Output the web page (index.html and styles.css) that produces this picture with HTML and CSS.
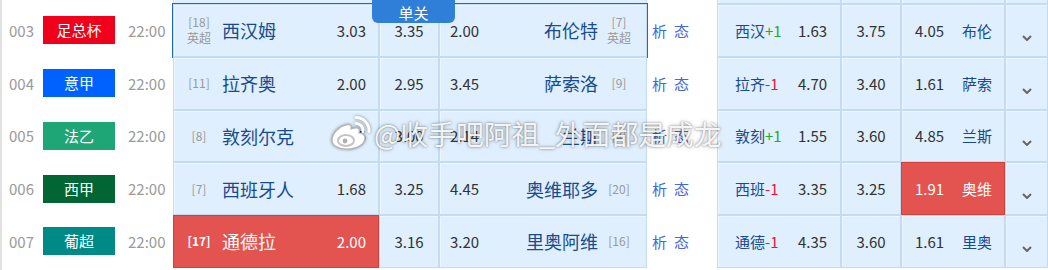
FILE: index.html
```html
<!DOCTYPE html>
<html lang="zh-CN">
<head>
<meta charset="utf-8">
<title>竞彩</title>
<link rel="stylesheet" href="styles.css">
</head>
<body>
<div class="board">
  <div class="row ghost">
    <div class="lead"></div>
    <div class="match">
      <div class="cell home"></div><div class="cell draw"></div><div class="cell away"></div>
    </div>
    <div class="ana"></div>
    <div class="hcp">
      <div class="cell h1"></div><div class="cell h2"></div><div class="cell h3"></div><div class="cell more"></div>
    </div>
  </div>

  <div class="row">
    <div class="lead"><span class="no">003</span><span class="league lg-red">足总杯</span><span class="time">22:00</span></div>
    <div class="match active">
      <span class="tag">单关</span>
      <div class="cell home"><span class="rank">[18]<small>英超</small></span><span class="name">西汉姆</span><span class="odd">3.03</span></div>
      <div class="cell draw"><span class="odd">3.35</span></div>
      <div class="cell away"><span class="odd">2.00</span><span class="name">布伦特</span><span class="rank">[7]<small>英超</small></span></div>
    </div>
    <div class="ana"><span>析</span><span>态</span></div>
    <div class="hcp">
      <div class="cell h1"><span class="hname">西汉<em class="up">+1</em></span><span class="odd">1.63</span></div>
      <div class="cell h2"><span class="odd">3.75</span></div>
      <div class="cell h3"><span class="odd">4.05</span><span class="hname">布伦</span></div>
      <div class="cell more"><svg class="chev" viewBox="0 0 10 6" width="10" height="6"><path d="M1 1 L5 5 L9 1" fill="none" stroke="#666" stroke-width="2"/></svg></div>
    </div>
  </div>

  <div class="row">
    <div class="lead"><span class="no">004</span><span class="league lg-blue">意甲</span><span class="time">22:00</span></div>
    <div class="match">
      <div class="cell home"><span class="rank">[11]</span><span class="name">拉齐奥</span><span class="odd">2.00</span></div>
      <div class="cell draw"><span class="odd">2.95</span></div>
      <div class="cell away"><span class="odd">3.45</span><span class="name">萨索洛</span><span class="rank">[9]</span></div>
    </div>
    <div class="ana"><span>析</span><span>态</span></div>
    <div class="hcp">
      <div class="cell h1"><span class="hname">拉齐<em class="down">-1</em></span><span class="odd">4.70</span></div>
      <div class="cell h2"><span class="odd">3.40</span></div>
      <div class="cell h3"><span class="odd">1.61</span><span class="hname">萨索</span></div>
      <div class="cell more"><svg class="chev" viewBox="0 0 10 6" width="10" height="6"><path d="M1 1 L5 5 L9 1" fill="none" stroke="#666" stroke-width="2"/></svg></div>
    </div>
  </div>

  <div class="row">
    <div class="lead"><span class="no">005</span><span class="league lg-green">法乙</span><span class="time">22:00</span></div>
    <div class="match">
      <div class="cell home"><span class="rank">[8]</span><span class="name">敦刻尔克</span><span class="odd">3.05</span></div>
      <div class="cell draw"><span class="odd">3.00</span></div>
      <div class="cell away"><span class="odd">2.14</span><span class="name">兰斯</span><span class="rank">[4]</span></div>
    </div>
    <div class="ana"><span>析</span><span>态</span></div>
    <div class="hcp">
      <div class="cell h1"><span class="hname">敦刻<em class="up">+1</em></span><span class="odd">1.55</span></div>
      <div class="cell h2"><span class="odd">3.60</span></div>
      <div class="cell h3"><span class="odd">4.85</span><span class="hname">兰斯</span></div>
      <div class="cell more"><svg class="chev" viewBox="0 0 10 6" width="10" height="6"><path d="M1 1 L5 5 L9 1" fill="none" stroke="#666" stroke-width="2"/></svg></div>
    </div>
  </div>

  <div class="row">
    <div class="lead"><span class="no">006</span><span class="league lg-dgreen">西甲</span><span class="time">22:00</span></div>
    <div class="match">
      <div class="cell home"><span class="rank">[7]</span><span class="name">西班牙人</span><span class="odd">1.68</span></div>
      <div class="cell draw"><span class="odd">3.25</span></div>
      <div class="cell away"><span class="odd">4.45</span><span class="name">奥维耶多</span><span class="rank">[20]</span></div>
    </div>
    <div class="ana"><span>析</span><span>态</span></div>
    <div class="hcp">
      <div class="cell h1"><span class="hname">西班<em class="down">-1</em></span><span class="odd">3.35</span></div>
      <div class="cell h2"><span class="odd">3.25</span></div>
      <div class="cell h3 sel"><span class="odd">1.91</span><span class="hname">奥维</span></div>
      <div class="cell more"><svg class="chev" viewBox="0 0 10 6" width="10" height="6"><path d="M1 1 L5 5 L9 1" fill="none" stroke="#666" stroke-width="2"/></svg></div>
    </div>
  </div>

  <div class="row">
    <div class="lead"><span class="no">007</span><span class="league lg-teal">葡超</span><span class="time">22:00</span></div>
    <div class="match">
      <div class="cell home sel"><span class="rank">[17]</span><span class="name">通德拉</span><span class="odd">2.00</span></div>
      <div class="cell draw"><span class="odd">3.16</span></div>
      <div class="cell away"><span class="odd">3.20</span><span class="name">里奥阿维</span><span class="rank">[16]</span></div>
    </div>
    <div class="ana"><span>析</span><span>态</span></div>
    <div class="hcp">
      <div class="cell h1"><span class="hname">通德<em class="down">-1</em></span><span class="odd">4.35</span></div>
      <div class="cell h2"><span class="odd">3.60</span></div>
      <div class="cell h3"><span class="odd">1.61</span><span class="hname">里奥</span></div>
      <div class="cell more"><svg class="chev" viewBox="0 0 10 6" width="10" height="6"><path d="M1 1 L5 5 L9 1" fill="none" stroke="#666" stroke-width="2"/></svg></div>
    </div>
  </div>

  <div class="watermark">
    <svg class="wb-logo" viewBox="0 0 42 36" width="42" height="36">
      <path d="M17 10C11 11 3 18 3 25c0 6 7 9 15 9 10 0 18-5 18-11 0-3-3-5-6-5 1-3 0-6-4-5l-4 1c1-4-1-5-5-4z" fill="#fff" stroke="#b5b5b5" stroke-width="1.2"/>
      <ellipse cx="17" cy="25.5" rx="8" ry="5.5" fill="none" stroke="#c4c4c4" stroke-width="2"/>
      <circle cx="16" cy="26" r="2.4" fill="#b0b0b0"/>
      <path d="M27 8.5a7 7 0 0 1 7 8" fill="none" stroke="#fff" stroke-width="3" stroke-linecap="round"/>
      <path d="M27 2.5a13 13 0 0 1 13 14" fill="none" stroke="#fff" stroke-width="3" stroke-linecap="round"/>
    </svg>
    <span class="wb-text">@收手吧阿祖_外面都是成龙</span>
  </div>
</div>
</body>
</html>
```

FILE: styles.css
```css
html, body {
  margin: 0;
  padding: 0;
  background: #fff;
}
body {
  font-family: "Noto Sans CJK SC", "Noto Sans", sans-serif;
  font-size: 15px;
  color: #333;
  height: 270px;
  overflow: hidden;
}
.board {
  position: relative;
  display: flex;
  flex-direction: column;
  width: 1046px;
  border-left: 2px solid #e2e2e2;
  min-height: 270px;
}
.row {
  display: flex;
  flex: none;
  height: 52.75px;
}
.row.ghost {
  margin-top: -48.75px;
}
.lead {
  width: 171px;
  display: flex;
  align-items: center;
  padding-left: 7px;
  box-sizing: border-box;
}
.no {
  width: 34px;
  color: #9a9a9a;
}
.league {
  width: 72px;
  height: 28px;
  line-height: 28px;
  text-align: center;
  color: #fff;
}
.lg-red { background: #f0001a; }
.lg-blue { background: #0062fe; }
.lg-green { background: #1ea677; }
.lg-dgreen { background: #016633; }
.lg-teal { background: #008a87; }
.time {
  margin-left: 13px;
  color: #9a9a9a;
}
.match {
  position: relative;
  width: 474px;
  display: flex;
}
.match.active {
  outline: 1px solid #1d6cb8;
}
.tag {
  position: absolute;
  left: 199px;
  top: -5px;
  width: 83px;
  height: 24px;
  line-height: 28px;
  text-align: center;
  color: #fff;
  background: #2f7ed8;
  border-radius: 0 0 6px 6px;
  z-index: 2;
}
.cell {
  box-sizing: border-box;
  height: 100%;
  display: flex;
  align-items: center;
  background: #dfeffd;
  border: 1px solid #c3dbf3;
  box-shadow: inset 1px 1px 0 #eef7ff;
}
.cell.sel {
  background: #e35451;
  border-color: #d0423e;
  box-shadow: none;
  color: #fff;
}
.home { width: 206px; padding: 0 12px 0 13px; }
.draw { width: 60px; justify-content: center; }
.away { width: 208px; padding: 0 15px 0 10px; }
.rank {
  width: 24px;
  display: flex;
  flex-direction: column;
  align-items: center;
  font-size: 12px;
  line-height: 16px;
  color: #999;
}
.rank small {
  font-size: 12px;
}
.name {
  font-size: 18px;
  color: #184a8e;
}
.home .name { margin-left: 11px; }
.home .odd { margin-left: auto; }
.away .name { margin-left: auto; margin-right: 9px; }
.sel .rank { color: #fff; font-weight: bold; }
.sel .name, .sel .odd, .sel .hname { color: #fff; }
.odd { color: #333; }
.ana {
  width: 70px;
  display: flex;
  align-items: center;
  padding-left: 5px;
  box-sizing: border-box;
  gap: 7px;
  color: #3f6ad8;
}
.hcp {
  width: 331px;
  display: flex;
}
.h1 { width: 124px; padding-left: 17px; }
.h2 { width: 60px; justify-content: center; }
.h3 { width: 104px; padding-left: 13px; }
.more { width: 43px; justify-content: center; }
.hname { color: #184a8e; }
.h1 .hname { width: 63px; }
.h3 .odd { width: 47px; }
.up { font-style: normal; color: #2fa52f; }
.down { font-style: normal; color: #ee1133; }
.chev {
  margin-top: 15px;
}
.watermark {
  position: absolute;
  left: 327px;
  top: 113px;
  display: flex;
  align-items: center;
  pointer-events: none;
}
.wb-logo {
  filter: drop-shadow(0 0 1.5px rgba(0, 0, 0, 0.45));
}
.wb-text {
  margin-left: 3px;
  font-size: 27.8px;
  color: rgba(255, 255, 255, 0.93);
  text-shadow: 0 0 2px rgba(0, 0, 0, 0.45), 0 0 4px rgba(0, 0, 0, 0.25);
  white-space: nowrap;
}
```
